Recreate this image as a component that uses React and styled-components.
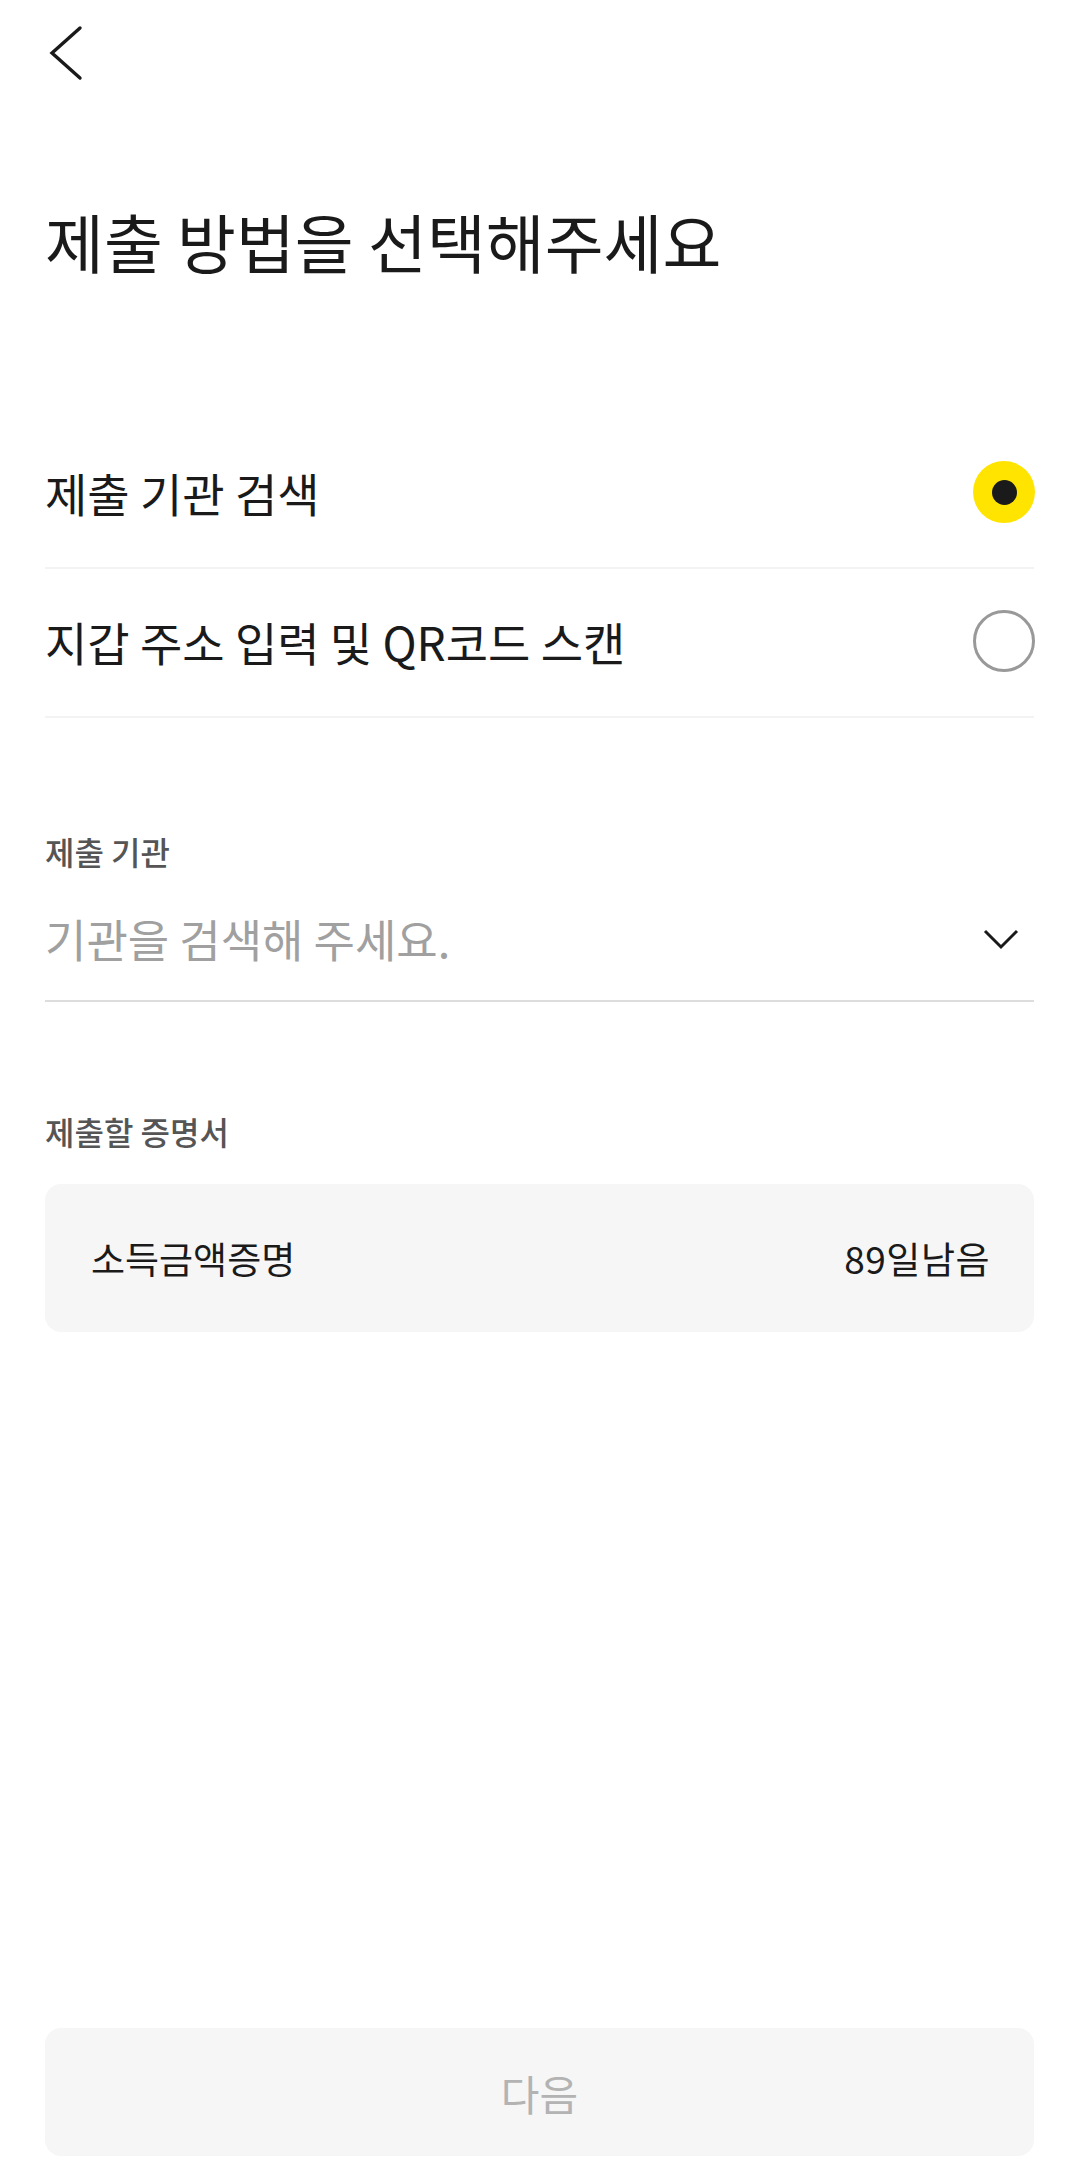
import React from 'react'
import styled, { createGlobalStyle } from 'styled-components'

const GlobalStyle = createGlobalStyle`
    html, body {
        margin:0;
        padding:0;
        background:#ffffff;
    }
    body {
        font-family:'Noto Sans CJK KR', 'Noto Sans', sans-serif;
        color:#1a1a1a;
    }
`

const Page = styled.div`
    display:flex;
    flex-direction:column;
    min-height:100vh;
    box-sizing:border-box;
    padding:0 46px 26px 45px;
`

const Header = styled.div`
    display:flex;
    align-items:center;
    height:106px;
`

const BackButton = styled.button`
    display:flex;
    align-items:center;
    padding:0;
    margin-left:4px;
    border:none;
    background:none;
`

const Title = styled.h1`
    margin:93px 0 0 0;
    font-size:64px;
    font-weight:400;
    line-height:1.3;
    color:#1a1a1a;
`

const OptionList = styled.div`
    display:flex;
    flex-direction:column;
    margin-top:138px;
`

const OptionRow = styled.div`
    display:flex;
    justify-content:space-between;
    align-items:center;
    height:144px;
    padding-bottom:3px;
    border-bottom:2px solid #f3f3f3;
`

const OptionText = styled.span`
    font-size:46px;
    color:#1a1a1a;
`

const Radio = styled.span`
    display:flex;
    justify-content:center;
    align-items:center;
    width:62px;
    height:62px;
    box-sizing:border-box;
    border-radius:50%;
    margin-right:-1px;
    background:${p => p.checked ? '#ffe400' : 'transparent'};
    border:${p => p.checked ? 'none' : '3.5px solid #999999'};
    &::after {
        content:'';
        display:${p => p.checked ? 'block' : 'none'};
        width:25px;
        height:25px;
        border-radius:50%;
        background:#1a1a1a;
    }
`

const Label = styled.div`
    margin-top:${p => p.top}px;
    font-size:32px;
    font-weight:500;
    line-height:1.3;
    color:#555555;
`

const Field = styled.div`
    display:flex;
    justify-content:space-between;
    align-items:center;
    height:122px;
    margin-top:5px;
    padding-right:15px;
    border-bottom:2px solid #dddddd;
`

const Placeholder = styled.span`
    font-size:45px;
    color:#a0a0a0;
`

const CertCard = styled.div`
    display:flex;
    justify-content:space-between;
    align-items:center;
    height:148px;
    margin-top:32px;
    padding:0 44px 0 46px;
    border-radius:16px;
    background:#f6f6f6;
    font-size:37px;
    color:#1a1a1a;
`

const Remaining = styled.span`
    letter-spacing:0.5px;
`

const NextButton = styled.button`
    display:flex;
    justify-content:center;
    align-items:center;
    margin-top:auto;
    height:128px;
    width:100%;
    border:none;
    border-radius:16px;
    background:#f6f6f6;
    font-family:inherit;
    font-size:42px;
    color:#b3b3b3;
`

const options = [
    { label:'제출 기관 검색', checked:true },
    { label:'지갑 주소 입력 및 QR코드 스캔', checked:false },
]

const App = () => {
    return (
        <Page>
            <GlobalStyle />
            <Header>
                <BackButton>
                    <svg width="34" height="56" viewBox="0 0 34 56" fill="none">
                        <path d="M31 3 L3 28 L31 53" stroke="#1a1a1a" strokeWidth="3.4" strokeLinecap="round" strokeLinejoin="miter" />
                    </svg>
                </BackButton>
            </Header>
            <Title>제출 방법을 선택해주세요</Title>
            <OptionList>
                {options.map(o => (
                    <OptionRow key={o.label}>
                        <OptionText>{o.label}</OptionText>
                        <Radio checked={o.checked} />
                    </OptionRow>
                ))}
            </OptionList>
            <Label top={113}>제출 기관</Label>
            <Field>
                <Placeholder>기관을 검색해 주세요.</Placeholder>
                <svg width="36" height="22" viewBox="0 0 36 22" fill="none">
                    <path d="M2 3 L18 19 L34 3" stroke="#1a1a1a" strokeWidth="3" />
                </svg>
            </Field>
            <Label top={109}>제출할 증명서</Label>
            <CertCard>
                <span>소득금액증명</span>
                <Remaining>89일남음</Remaining>
            </CertCard>
            <NextButton>다음</NextButton>
        </Page>
    )
}

export default App
